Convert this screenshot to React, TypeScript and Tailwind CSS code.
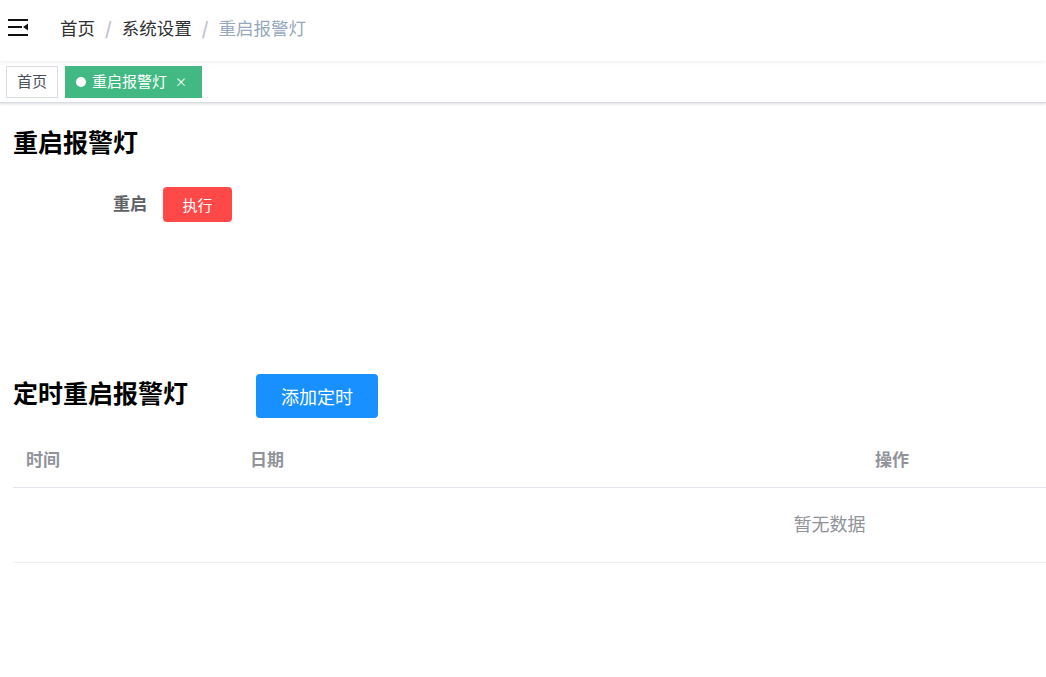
import React from "react";

const font = { fontFamily: '"Noto Sans CJK SC", "Noto Sans", Arial, sans-serif' };

function Hamburger() {
  return (
    <svg width="20" height="17" viewBox="0 0 20 17" className="block">
      <rect x="0" y="0" width="20" height="2" fill="#111" />
      <rect x="0" y="7" width="14" height="2" fill="#111" />
      <polygon points="15,8 20,4.5 20,11.5" fill="#111" />
      <rect x="0" y="15" width="20" height="2" fill="#111" />
    </svg>
  );
}

export default function App() {
  return (
    <div className="w-[1046px] h-[677px] overflow-hidden bg-white text-[#303133]" style={font}>
      {/* navbar */}
      <div className="relative z-10 h-[61px] flex items-center pb-[6px] bg-white shadow-[0_1px_4px_rgba(0,21,41,0.08)]">
        <div className="pl-[8px] pr-[32px] flex items-center pb-[1px]">
          <Hamburger />
        </div>
        <div className="flex items-center text-[17.5px] leading-none pt-[1px]">
          <span className="text-[#303133]">首页</span>
          <span className="mx-[10px] font-bold text-[#c0c4cc]">/</span>
          <span className="text-[#303133]">系统设置</span>
          <span className="mx-[10px] font-bold text-[#c0c4cc]">/</span>
          <span className="text-[#97a8be]">重启报警灯</span>
        </div>
      </div>

      {/* tags view */}
      <div className="h-[42px] flex items-center gap-[7px] pl-[6px] bg-white border-b border-[#d8dce5] shadow-[0_1px_3px_0_rgba(0,0,0,0.12),0_0_3px_0_rgba(0,0,0,0.04)]">
        <div className="h-[32px] px-[10px] flex items-center border border-[#d8dce5] text-[15px] text-[#495060] bg-white">
          首页
        </div>
        <div className="h-[32px] pl-[10px] pr-[14px] flex items-center bg-[#42b983] border border-[#42b983] text-[15px] text-white">
          <span className="w-[10px] h-[10px] rounded-full bg-white mr-[6px]" />
          <span>重启报警灯</span>
          <span className="ml-[8px] text-[12px]">×</span>
        </div>
      </div>

      {/* content */}
      <div className="px-[13px]">
        <h1 className="mt-[22px] text-[25px] font-bold leading-[32px] text-black">重启报警灯</h1>
        <div className="mt-[30px] flex items-center">
          <div className="w-[150px] pr-[16px] text-right text-[17px] font-bold text-[#606266] leading-none pb-[5px]">重启</div>
          <button className="w-[69px] h-[35px] rounded-[4px] bg-[#ff4949] text-white text-[15px] leading-none">
            执行
          </button>
        </div>

        <div className="mt-[152px] flex items-center">
          <h2 className="w-[243px] text-[25px] font-bold leading-[32px] text-black pb-[8px]">定时重启报警灯</h2>
          <button className="w-[122px] h-[44px] rounded-[4px] bg-[#1890ff] text-white text-[18px] leading-none">
            添加定时
          </button>
        </div>

        {/* table */}
        <div className="mt-[16px] w-[1633px]">
          <div className="flex h-[54px] items-center pb-[4px] border-b border-[#e4e7ed] text-[17px] font-bold text-[#909399]">
            <div className="w-[224px] pl-[13px]">时间</div>
            <div className="w-[625px] pl-[13px]">日期</div>
            <div className="flex-1 pl-[13px]">操作</div>
          </div>
          <div className="h-[75px] flex items-center justify-center pb-[3px] border-b border-[#ebeef5] text-[18px] text-[#909399]">
            暂无数据
          </div>
        </div>
      </div>
    </div>
  );
}
